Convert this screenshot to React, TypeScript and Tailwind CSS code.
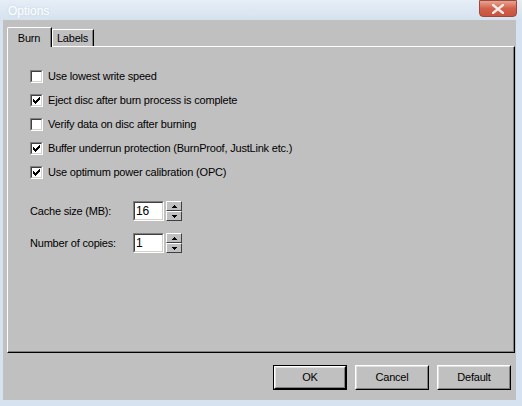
import React, { useState } from 'react';

const options = [
  { label: 'Use lowest write speed', checked: false },
  { label: 'Eject disc after burn process is complete', checked: true },
  { label: 'Verify data on disc after burning', checked: false },
  { label: 'Buffer underrun protection (BurnProof, JustLink etc.)', checked: true },
  { label: 'Use optimum power calibration (OPC)', checked: true },
];

const Check: React.FC<{ checked: boolean }> = ({ checked }) => (
  <div className="w-[13px] h-[13px] bg-white border border-t-[#808080] border-l-[#808080] border-b-white border-r-white shrink-0">
    <div className="w-full h-full border border-t-[#404040] border-l-[#404040] border-b-[#d4d0c8] border-r-[#d4d0c8] flex items-center justify-center">
      {checked && (
        <svg width="7" height="7" viewBox="0 0 7 7">
          <path d="M0 2h1v1h1v1h1V3h1V2h1V1h1V0h1v3H6v1H5v1H4v1H3v1H2V6H1V5H0z" fill="#000" />
        </svg>
      )}
    </div>
  </div>
);

const Spin: React.FC<{ value: string }> = ({ value }) => (
  <div className="flex items-center gap-[2px]">
    <div className="w-[31px] h-[20px] bg-white border border-t-[#808080] border-l-[#808080] border-b-white border-r-white">
      <div className="w-full h-full border border-t-[#404040] border-l-[#404040] border-b-[#d4d0c8] border-r-[#d4d0c8] flex items-center pl-[1px] text-[12px] leading-none text-black">
        {value}
      </div>
    </div>
    <div className="flex flex-col w-[16px] h-[20px]">
      {['up', 'down'].map((d) => (
        <div
          key={d}
          className="h-[10px] bg-[#c0c0c0] border border-t-white border-l-white border-b-[#404040] border-r-[#404040] flex items-center justify-center"
        >
          <svg width="5" height="3" viewBox="0 0 5 3">
            {d === 'up' ? <path d="M2 0h1v1h1v1h1v1H0V2h1V1h1z" fill="#000" /> : <path d="M0 0h5v1H4v1H3v1H2V2H1V1H0z" fill="#000" />}
          </svg>
        </div>
      ))}
    </div>
  </div>
);

const Btn: React.FC<{ label: string; isDefault?: boolean }> = ({ label, isDefault }) => (
  <div className={`h-[25px] w-[74px] ${isDefault ? 'border border-black' : ''}`}>
    <div className="w-full h-full border border-t-white border-l-white border-b-black border-r-black">
      <div className="w-full h-full border border-t-[#dfdfdf] border-l-[#dfdfdf] border-b-[#808080] border-r-[#808080] flex items-center justify-center text-black">
        {label}
      </div>
    </div>
  </div>
);

export default function App() {
  const [tab, setTab] = useState('Burn');

  return (
    <div
      className="w-[522px] h-[406px] flex flex-col bg-[#d6e2ef] overflow-hidden text-[11px] tracking-[-0.2px]"
      style={{ fontFamily: '"Liberation Sans", Arial, sans-serif' }}
    >
      {/* title bar */}
      <div className="h-[20px] relative bg-gradient-to-b from-[#e6eef7] to-[#d6e2ef] shrink-0">
        <span className="absolute left-[8px] top-[2px] text-[12px] tracking-normal text-white [text-shadow:0_0_3px_#c2d0e0]">
          Options
        </span>
        <div className="absolute left-[479px] top-0 w-[38px] h-[17px] rounded-b-[4px] border border-[#9a4a3c] bg-gradient-to-b from-[#e6a493] via-[#d2604a] to-[#c85440] flex items-center justify-center">
          <svg width="12" height="10" viewBox="0 0 12 10">
            <path d="M1 1l10 8M11 1L1 9" stroke="#f5ebe8" strokeWidth="2.4" strokeLinecap="square" />
          </svg>
        </div>
      </div>

      {/* client area */}
      <div className="flex-1 ml-[3px] mr-[6px] mb-[6px] bg-[#c0c0c0] flex flex-col">
        <div className="h-[26px] flex items-end pl-[4px] relative z-10">
          {['Burn', 'Labels'].map((t) => {
            const active = tab === t;
            return (
              <div
                key={t}
                onClick={() => setTab(t)}
                className={`bg-[#c0c0c0] border-t border-l border-t-white border-l-white border-r border-r-black flex items-center justify-center cursor-default ${
                  active ? 'h-[20px] w-[45px] -mb-[1px] rounded-tl-[2px]' : 'h-[17px] w-[42px] mb-0'
                }`}
              >
                <div className={`w-full h-full border-r border-r-[#808080] flex justify-center items-center ${active ? 'pt-[2px]' : ''}`}>
                  {t}
                </div>
              </div>
            );
          })}
        </div>

        <div className="h-[307px] ml-[4px] mr-[1px] border border-t-white border-l-white border-b-black border-r-black">
          <div className="w-full h-full border-b border-r border-b-[#808080] border-r-[#808080] pl-[22px] pt-[23px]">
            <div className="flex flex-col gap-[11px]">
              {options.map((o) => (
                <div key={o.label} className="flex items-center gap-[5px] h-[13px] text-black">
                  <Check checked={o.checked} />
                  <span>{o.label}</span>
                </div>
              ))}
            </div>

            <div className="flex flex-col gap-[12px] mt-[22px] text-black">
              <div className="flex items-center">
                <span className="w-[103px]">Cache size (MB):</span>
                <Spin value="16" />
              </div>
              <div className="flex items-center">
                <span className="w-[103px]">Number of copies:</span>
                <Spin value="1" />
              </div>
            </div>
          </div>
        </div>

        <div className="flex justify-end gap-[8px] pr-[5px] mt-[12px]">
          <Btn label="OK" isDefault />
          <Btn label="Cancel" />
          <Btn label="Default" />
        </div>
      </div>
    </div>
  );
}
